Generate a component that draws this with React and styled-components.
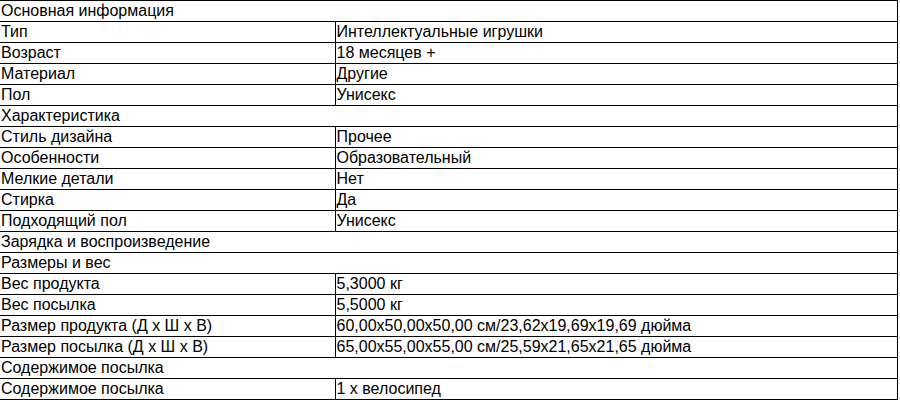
import styled, { createGlobalStyle } from "styled-components";

const GlobalStyle = createGlobalStyle`
  html, body {
    margin: 0;
    padding: 0;
    background: #fff;
  }
  body {
    font-family: "Liberation Sans", Arial, sans-serif;
    color: #000;
  }
`;

const SpecTable = styled.table`
  width: 898px;
  border-collapse: collapse;
  table-layout: fixed;
  font-size: 16px;
  line-height: 18px;
  col.label {
    width: 335px;
  }
`;

const Cell = styled.td`
  border: 1px solid #000;
  padding: 1px 1px;
  height: 18px;
  white-space: nowrap;
  overflow: hidden;
  vertical-align: middle;
  &:first-child {
    border-left: none;
  }
`;

const sections = [
  {
    title: "Основная информация",
    rows: [
      ["Тип", "Интеллектуальные игрушки"],
      ["Возраст", "18 месяцев +"],
      ["Материал", "Другие"],
      ["Пол", "Унисекс"],
    ],
  },
  {
    title: "Характеристика",
    rows: [
      ["Стиль дизайна", "Прочее"],
      ["Особенности", "Образовательный"],
      ["Мелкие детали", "Нет"],
      ["Стирка", "Да"],
      ["Подходящий пол", "Унисекс"],
    ],
  },
  { title: "Зарядка и воспроизведение", rows: [] },
  {
    title: "Размеры и вес",
    rows: [
      ["Вес продукта", "5,3000 кг"],
      ["Вес посылка", "5,5000 кг"],
      ["Размер продукта (Д x Ш x В)", "60,00x50,00x50,00 см/23,62x19,69x19,69 дюйма"],
      ["Размер посылка (Д x Ш x В)", "65,00x55,00x55,00 см/25,59x21,65x21,65 дюйма"],
    ],
  },
  {
    title: "Содержимое посылка",
    rows: [["Содержимое посылка", "1 x велосипед"]],
  },
];

const App = () => {
  return (
    <>
      <GlobalStyle />
      <SpecTable>
        <colgroup>
          <col className="label" />
          <col />
        </colgroup>
        <tbody>
          {sections.map((section) => [
            <tr key={section.title}>
              <Cell colSpan={2}>{section.title}</Cell>
            </tr>,
            ...section.rows.map(([label, value]) => (
              <tr key={section.title + label}>
                <Cell>{label}</Cell>
                <Cell>{value}</Cell>
              </tr>
            )),
          ])}
        </tbody>
      </SpecTable>
    </>
  );
};

export default App;
